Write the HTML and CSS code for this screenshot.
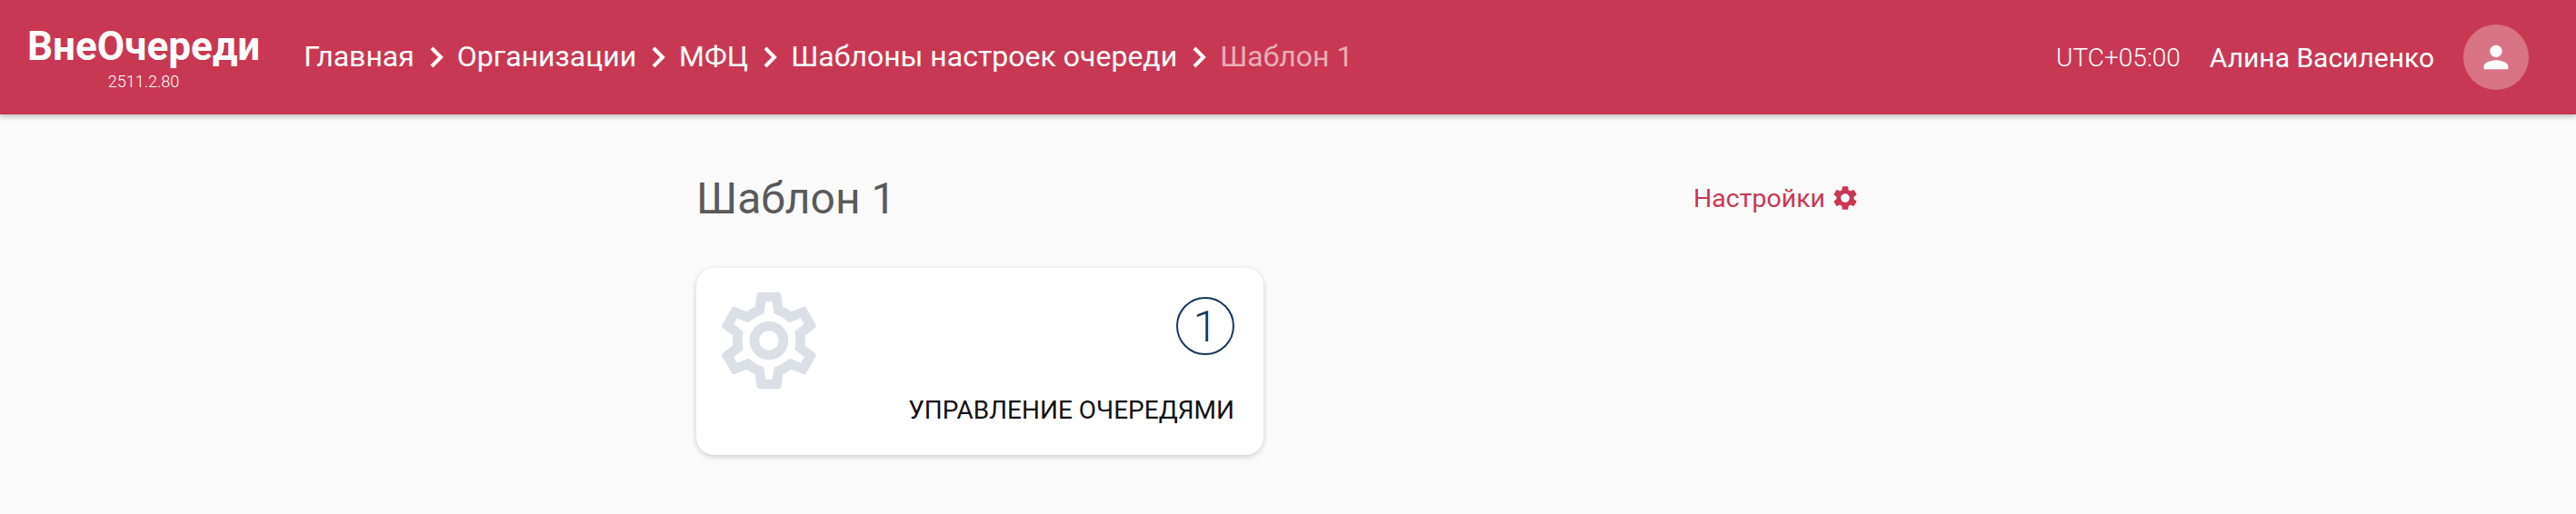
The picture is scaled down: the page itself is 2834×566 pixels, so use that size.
FILE: index.html
```html
<!DOCTYPE html>
<html lang="ru">
<head>
  <meta charset="UTF-8" />
  <meta name="viewport" content="width=device-width, initial-scale=1.0" />
  <title>Шаблон 1 - ВнеОчереди</title>
  <link rel="stylesheet" href="styles.css">
</head>
<body>
  <header class="topbar">
    <div class="logo">
      <div class="logo-name">ВнеОчереди</div>
      <div class="logo-version">2511.2.80</div>
    </div>
    <nav class="crumbs">
      <a class="crumb" href="#">Главная</a>
      <svg class="crumb-sep" viewBox="0 0 15 24"><path d="M2 2l10 10-10 10" /></svg>
      <a class="crumb" href="#">Организации</a>
      <svg class="crumb-sep" viewBox="0 0 15 24"><path d="M2 2l10 10-10 10" /></svg>
      <a class="crumb" href="#">МФЦ</a>
      <svg class="crumb-sep" viewBox="0 0 15 24"><path d="M2 2l10 10-10 10" /></svg>
      <a class="crumb" href="#">Шаблоны настроек очереди</a>
      <svg class="crumb-sep" viewBox="0 0 15 24"><path d="M2 2l10 10-10 10" /></svg>
      <span class="crumb crumb-current">Шаблон 1</span>
    </nav>
    <div class="user">
      <span class="user-tz">UTC+05:00</span>
      <span class="user-name">Алина Василенко</span>
      <div class="avatar">
        <svg viewBox="0 0 24 24"><path d="M12 12c2.21 0 4-1.79 4-4s-1.79-4-4-4-4 1.79-4 4 1.79 4 4 4zm0 2c-2.67 0-8 1.34-8 4v2h16v-2c0-2.66-5.33-4-8-4z" /></svg>
      </div>
    </div>
  </header>

  <main class="content">
    <div class="page-head">
      <h1>Шаблон 1</h1>
      <a class="settings-link" href="#">
        Настройки
        <svg viewBox="0 0 24 24"><path d="M19.14 12.94c.04-.3.06-.61.06-.94 0-.32-.02-.64-.07-.94l2.03-1.58c.18-.14.23-.41.12-.61l-1.92-3.32c-.12-.22-.37-.29-.59-.22l-2.39.96c-.5-.38-1.03-.7-1.62-.94l-.36-2.54c-.04-.24-.24-.41-.48-.41h-3.84c-.24 0-.43.17-.47.41l-.36 2.54c-.59.24-1.13.57-1.62.94l-2.39-.96c-.22-.08-.47 0-.59.22L2.74 8.87c-.12.21-.08.47.12.61l2.03 1.58c-.05.3-.09.63-.09.94s.02.64.07.94l-2.03 1.58c-.18.14-.23.41-.12.61l1.92 3.32c.12.22.37.29.59.22l2.39-.96c.5.38 1.03.7 1.62.94l.36 2.54c.05.24.24.41.48.41h3.84c.24 0 .44-.17.47-.41l.36-2.54c.59-.24 1.13-.56 1.62-.94l2.39.96c.22.08.47 0 .59-.22l1.92-3.32c.12-.22.07-.47-.12-.61l-2.01-1.58zM12 15.6c-1.98 0-3.6-1.62-3.6-3.6s1.62-3.6 3.6-3.6 3.6 1.62 3.6 3.6-1.62 3.6-3.6 3.6z" /></svg>
      </a>
    </div>

    <div class="cards">
      <a class="card" href="#">
        <div class="card-top">
          <svg class="card-icon" viewBox="0 0 24 24"><path d="M19.43 12.98c.04-.32.07-.64.07-.98 0-.34-.03-.66-.07-.98l2.11-1.65c.19-.15.24-.42.12-.64l-2-3.46c-.09-.16-.26-.25-.44-.25-.06 0-.12.01-.17.03l-2.49 1c-.52-.4-1.08-.73-1.69-.98l-.38-2.65C14.46 2.18 14.25 2 14 2h-4c-.25 0-.46.18-.49.42l-.38 2.65c-.61.25-1.17.59-1.69.98l-2.49-1c-.06-.02-.12-.03-.18-.03-.17 0-.34.09-.43.25l-2 3.46c-.13.22-.07.49.12.64l2.11 1.65c-.04.32-.07.65-.07.98 0 .33.03.66.07.98l-2.11 1.65c-.19.15-.24.42-.12.64l2 3.46c.09.16.26.25.44.25.06 0 .12-.01.17-.03l2.49-1c.52.4 1.08.73 1.69.98l.38 2.65c.03.24.24.42.49.42h4c.25 0 .46-.18.49-.42l.38-2.65c.61-.25 1.17-.59 1.69-.98l2.49 1c.06.02.12.03.18.03.17 0 .34-.09.43-.25l2-3.46c.12-.22.07-.49-.12-.64l-2.11-1.65zm-1.98-1.71c.04.31.05.52.05.73 0 .21-.02.43-.05.73l-.14 1.13.89.7 1.08.84-.7 1.21-1.27-.51-1.04-.42-.9.68c-.43.32-.84.56-1.25.73l-1.06.43-.16 1.13-.2 1.35h-1.4l-.19-1.35-.16-1.13-1.06-.43c-.43-.18-.83-.41-1.23-.71l-.91-.7-1.06.43-1.27.51-.7-1.21 1.08-.84.89-.7-.14-1.13c-.03-.31-.05-.54-.05-.74s.02-.43.05-.73l.14-1.13-.89-.7-1.08-.84.7-1.21 1.27.51 1.04.42.9-.68c.43-.32.84-.56 1.25-.73l1.06-.43.16-1.13.2-1.35h1.39l.19 1.35.16 1.13 1.06.43c.43.18.83.41 1.23.71l.91.7 1.06-.43 1.27-.51.7 1.21-1.07.85-.89.7.14 1.13zM12 8c-2.21 0-4 1.79-4 4s1.79 4 4 4 4-1.79 4-4-1.79-4-4-4zm0 6c-1.1 0-2-.9-2-2s.9-2 2-2 2 .9 2 2-.9 2-2 2z" /></svg>
          <div class="card-count">1</div>
        </div>
        <div class="card-title">УПРАВЛЕНИЕ ОЧЕРЕДЯМИ</div>
      </a>
    </div>
  </main>
</body>
</html>
```

FILE: styles.css
```css
* {
  box-sizing: border-box;
}
html,
body {
  height: 100%;
}
body {
  margin: 0;
  background: #fafafa;
  font-family: Roboto, sans-serif;
  overflow: hidden;
}
a {
  color: inherit;
  text-decoration: none;
}

.topbar {
  height: 126px;
  padding: 0 52px 0 30px;
  display: flex;
  align-items: center;
  background: #c93852;
  color: #fff;
  box-shadow: 0 2px 6px rgba(0,0,0,0.25);
}
.logo {
  text-align: center;
  margin-right: 48px;
}
.logo-name {
  font-size: 44px;
  line-height: 50px;
  font-weight: 700;
}
.logo-version {
  font-size: 18px;
  line-height: 22px;
  font-weight: 300;
  margin-top: 3px;
}
.crumbs {
  display: flex;
  align-items: center;
  font-size: 32px;
  margin-top: -3px;
}
.crumb-sep {
  width: 15px;
  height: 24px;
  margin: 2px 15px 0 17px;
  fill: none;
  stroke: #fff;
  stroke-width: 4;
}
.crumb-current {
  color: rgba(255,255,255,0.6);
}
.user {
  margin-left: auto;
  display: flex;
  align-items: center;
}
.user-tz {
  font-size: 28px;
  font-weight: 300;
  margin-right: 32px;
}
.user-name {
  font-size: 30px;
  margin-right: 32px;
}
.avatar {
  width: 72px;
  height: 72px;
  border-radius: 50%;
  background: rgba(255,255,255,0.3);
  display: flex;
  align-items: center;
  justify-content: center;
}
.avatar svg {
  width: 40px;
  height: 40px;
  fill: #fff;
}

.content {
  width: 1302px;
  margin: 0 auto;
  padding: 53px 22px 0 0;
}
.page-head {
  height: 78px;
  display: flex;
  align-items: center;
  justify-content: space-between;
}
h1 {
  margin: 0;
  font-size: 48px;
  font-weight: 400;
  color: #5a5a5a;
}
.settings-link {
  display: flex;
  align-items: center;
  gap: 6px;
  font-size: 28.5px;
  color: #c93852;
}
.settings-link svg {
  width: 32px;
  height: 32px;
  fill: #c93852;
}
.cards {
  margin-top: 38px;
  display: grid;
  grid-template-columns: repeat(2, 624px);
  gap: 32px;
}
.card {
  height: 206px;
  padding: 16px 32px 0 16px;
  background: #fff;
  border-radius: 20px;
  box-shadow: 0 2px 6px rgba(0,0,0,0.18);
}
.card-top {
  display: flex;
  justify-content: space-between;
  height: 120px;
}
.card-icon {
  width: 128px;
  height: 128px;
  fill: #dbe0e7;
}
.card-count {
  width: 64px;
  height: 64px;
  margin-top: 16px;
  border: 2px solid #17375e;
  border-radius: 50%;
  display: flex;
  align-items: center;
  justify-content: center;
  font-size: 48px;
  font-weight: 300;
  color: #17375e;
}
.card-title {
  margin-top: 4px;
  text-align: right;
  font-size: 28px;
  color: #111;
}
```
